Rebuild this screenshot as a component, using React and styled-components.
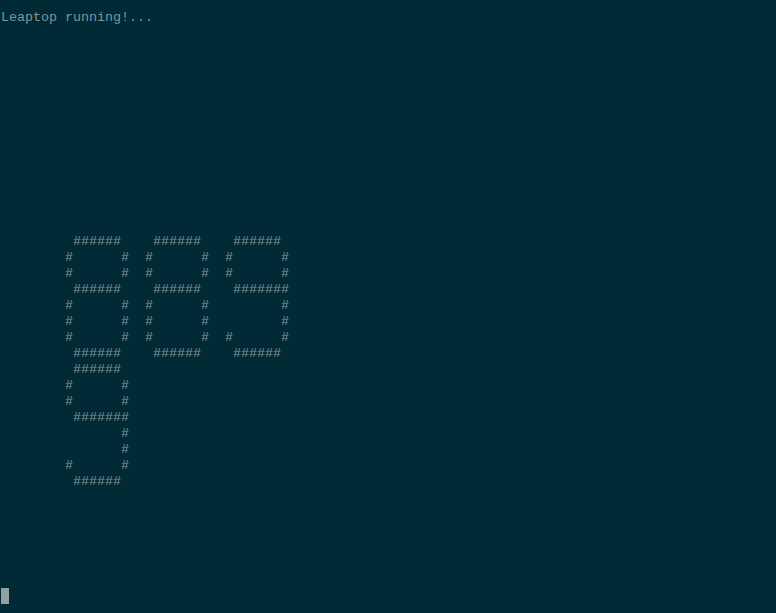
import React from 'react';
import styled, { createGlobalStyle } from 'styled-components';

const colors = {
  base03: '#002b36',
  base0: '#839496',
  base1: '#93a1a1',
};

const GlobalStyle = createGlobalStyle`
  html,
  body {
    margin: 0;
    padding: 0;
    background-color: ${colors.base03};
  }
`;

const Screen = styled.div`
  box-sizing: border-box;
  width: 100%;
  height: 613px;
  overflow: hidden;
  background-color: ${colors.base03};
  padding: 10px 0 0 1px;
`;

const Output = styled.pre`
  margin: 0;
  font-family: 'Liberation Mono', 'DejaVu Sans Mono', monospace;
  font-size: 13.333px;
  line-height: 16px;
  color: ${colors.base0};
  white-space: pre;
`;

const Cursor = styled.span`
  display: inline-block;
  width: 8px;
  height: 16px;
  vertical-align: -7px;
  background-color: ${colors.base1};
`;

const banner = [
  '         ######    ######    ######',
  '        #      #  #      #  #      #',
  '        #      #  #      #  #      #',
  '         ######    ######    #######',
  '        #      #  #      #         #',
  '        #      #  #      #         #',
  '        #      #  #      #  #      #',
  '         ######    ######    ######',
  '         ######',
  '        #      #',
  '        #      #',
  '         #######',
  '               #',
  '               #',
  '        #      #',
  '         ######',
];

const lines = [
  'Leaptop running!...',
  ...Array(13).fill(''),
  ...banner,
  ...Array(6).fill(''),
];

const App = () => (
  <>
    <GlobalStyle />
    <Screen>
      <Output>
        {lines.join('\n')}
        {'\n'}
        <Cursor />
      </Output>
    </Screen>
  </>
);

export default App;
